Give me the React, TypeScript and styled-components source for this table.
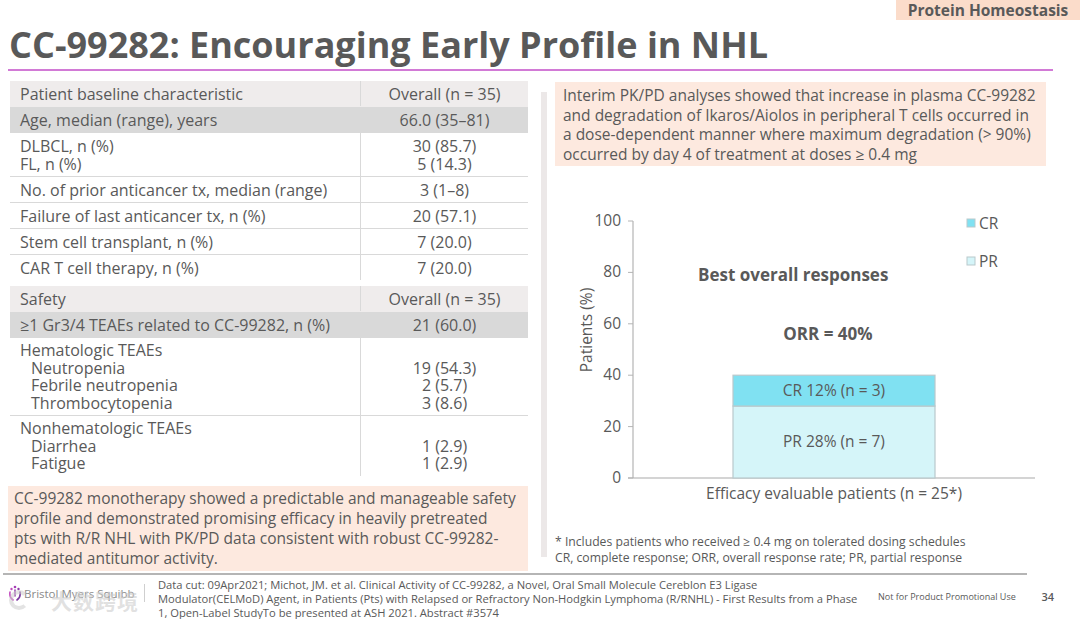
import React from 'react';
import styled, { createGlobalStyle } from 'styled-components';

const Global = createGlobalStyle`
  html, body { margin: 0; padding: 0; background: #fff; }
  body { font-family: "Open Sans", "Noto Sans", sans-serif; color: #595959; }
  * { box-sizing: border-box; }
`;

const TEXT = '#595959';

const Page = styled.div`
  width: 1080px;
  height: 619px;
  position: relative;
  overflow: hidden;
  background: #fff;
  display: flex;
  flex-direction: column;
`;

const Header = styled.header`
  display: flex;
  flex-direction: column;
`;

const TagRow = styled.div`
  display: flex;
  justify-content: flex-end;
  height: 20px;
`;

const Tag = styled.div`
  width: 184px;
  height: 20px;
  background: #fbdcca;
  font-weight: 700;
  font-size: 15.5px;
  line-height: 20px;
  text-align: center;
  color: ${TEXT};
`;

const Title = styled.h1`
  margin: 0;
  padding-left: 9px;
  height: 49px;
  font-size: 36px;
  font-weight: 700;
  line-height: 50px;
  letter-spacing: 0;
  color: ${TEXT};
  white-space: nowrap;
`;

const Rule = styled.div`
  height: 2px;
  margin: 0 27px 0 8px;
  background: #d27ad6;
`;

const Main = styled.main`
  display: flex;
  height: 502px;
`;

const LeftCol = styled.section`
  width: 518px;
  margin-left: 10px;
  padding-top: 10px;
  display: flex;
  flex-direction: column;
`;

const Table = styled.div`
  display: flex;
  flex-direction: column;
  font-size: 16px;
  color: ${TEXT};
`;

type Tone = 'head' | 'dark' | 'plain';

const Row = styled.div<{ $tone: Tone; $rule: boolean }>`
  display: grid;
  grid-template-columns: 350px 168px;
  background: ${(p) => (p.$tone === 'head' ? '#efecec' : p.$tone === 'dark' ? '#d9d9d9' : '#fff')};
  border-bottom: 1px solid ${(p) => (p.$rule ? '#d9d9d9' : 'transparent')};
`;

const LabelCell = styled.div`
  padding: 4px 0 3px 10px;
  line-height: 18px;
`;

const ValueCell = styled.div`
  padding: 4px 0 3px;
  line-height: 18px;
  text-align: center;
  border-left: 1px solid #d9d9d9;
`;

const Line = styled.div<{ $indent?: boolean }>`
  padding-left: ${(p) => (p.$indent ? '11px' : '0')};
  min-height: 18px;
  white-space: nowrap;
`;

const ListLine = styled(Line)`
  min-height: 17.5px;
  line-height: 17.5px;
`;

const TableGap = styled.div`
  height: 5px;
`;

const Summary = styled.div`
  margin: 9px 0 0 -2px;
  width: 520px;
  height: 85px;
  background: #fde9df;
  padding: 2px 0 0 6px;
  font-size: 15.5px;
  line-height: 20px;
  color: ${TEXT};
  white-space: nowrap;
`;

const Divider = styled.div`
  width: 6px;
  height: 465px;
  margin: 21px 0 0 13px;
  background: #ece8e8;
`;

const RightCol = styled.section`
  width: 491px;
  margin-left: 8px;
  padding-top: 11px;
  display: flex;
  flex-direction: column;
`;

const Callout = styled.div`
  background: #fde9df;
  height: 84px;
  padding: 4px 0 0 8px;
  font-size: 15.5px;
  line-height: 19.5px;
  color: ${TEXT};
  white-space: nowrap;
`;

const Chart = styled.svg`
  display: block;
  width: 491px;
  height: 350px;
  font-family: "Open Sans", "Noto Sans", sans-serif;
`;

const Footnote = styled.div`
  margin-top: 18px;
  font-size: 12.2px;
  line-height: 16px;
  color: ${TEXT};
  white-space: nowrap;
`;

const Footer = styled.footer`
  margin: 0 53px 0 3px;
  border-top: 2px solid #b5b5b5;
  height: 46px;
  display: flex;
  position: relative;
`;

const Logo = styled.div`
  width: 142px;
  height: 18px;
  margin-top: 9px;
  padding-left: 5px;
  display: flex;
  align-items: center;
  gap: 2px;
  align-self: flex-start;
  font-size: 11.5px;
  color: #8a8a8a;
  white-space: nowrap;
  border-right: 1px solid #cfcfcf;
`;

const Citation = styled.div`
  margin-left: 13px;
  width: 712px;
  padding-top: 3px;
  font-size: 11.2px;
  line-height: 14px;
  color: ${TEXT};
  white-space: nowrap;
`;

const Disclaimer = styled.div`
  margin-left: 8px;
  padding-top: 16px;
  font-size: 9px;
  line-height: 12px;
  color: ${TEXT};
  white-space: nowrap;
`;

const PageNum = styled.div`
  position: absolute;
  right: -27px;
  top: 14px;
  font-size: 11px;
  font-weight: 600;
  color: ${TEXT};
`;

const Watermark = styled.div`
  position: absolute;
  left: 6px;
  top: 13px;
  display: flex;
  align-items: center;
  gap: 22px;
  font-family: "Noto Sans CJK SC", sans-serif;
  font-size: 21px;
  font-weight: 700;
  line-height: 24px;
  color: rgba(205, 205, 205, 0.6);
  pointer-events: none;
  letter-spacing: 1px;
`;

const WmRing = styled.span`
  width: 20px;
  height: 20px;
  border-radius: 50%;
  border: 4px solid rgba(205, 205, 205, 0.55);
  border-right-color: transparent;
`;

type RowData = { label: string[]; value: string[]; tone: Tone; rule: boolean; list?: boolean };

const table1: RowData[] = [
  { label: ['Patient baseline characteristic'], value: ['Overall (n = 35)'], tone: 'head', rule: false },
  { label: ['Age, median (range), years'], value: ['66.0 (35–81)'], tone: 'dark', rule: false },
  { label: ['DLBCL, n (%)', 'FL, n (%)'], value: ['30 (85.7)', '5 (14.3)'], tone: 'plain', rule: true },
  { label: ['No. of prior anticancer tx, median (range)'], value: ['3 (1–8)'], tone: 'plain', rule: true },
  { label: ['Failure of last anticancer tx, n (%)'], value: ['20 (57.1)'], tone: 'plain', rule: true },
  { label: ['Stem cell transplant, n (%)'], value: ['7 (20.0)'], tone: 'plain', rule: true },
  { label: ['CAR T cell therapy, n (%)'], value: ['7 (20.0)'], tone: 'plain', rule: false },
];

const table2: RowData[] = [
  { label: ['Safety'], value: ['Overall (n = 35)'], tone: 'head', rule: false },
  { label: ['≥1 Gr3/4 TEAEs related to CC-99282, n (%)'], value: ['21 (60.0)'], tone: 'dark', rule: false },
  {
    label: ['Hematologic TEAEs', 'Neutropenia', 'Febrile neutropenia', 'Thrombocytopenia'],
    value: ['', '19 (54.3)', '2 (5.7)', '3 (8.6)'],
    tone: 'plain',
    rule: true,
    list: true,
  },
  {
    label: ['Nonhematologic TEAEs', 'Diarrhea', 'Fatigue'],
    value: ['', '1 (2.9)', '1 (2.9)'],
    tone: 'plain',
    rule: false,
    list: true,
  },
];

function DataTable({ rows }: { rows: RowData[] }) {
  return (
    <Table>
      {rows.map((r, i) => {
        const L = r.list ? ListLine : Line;
        return (
          <Row key={i} $tone={r.tone} $rule={r.rule}>
            <LabelCell>
              {r.label.map((t, j) => (
                <L key={j} $indent={!!r.list && j > 0}>
                  {t}
                </L>
              ))}
            </LabelCell>
            <ValueCell>
              {r.value.map((t, j) => (
                <L key={j}>{t}</L>
              ))}
            </ValueCell>
          </Row>
        );
      })}
    </Table>
  );
}

const ticks = [100, 80, 60, 40, 20, 0];
const Y0 = 312;
const STEP = 2.57;

function ResponseChart() {
  const y = (v: number) => Y0 - v * STEP;
  return (
    <Chart viewBox="0 0 491 350">
      <line x1={78} y1={y(100)} x2={78} y2={Y0} stroke="#b4b4b4" strokeWidth={1.2} />
      <line x1={73} y1={Y0} x2={480} y2={Y0} stroke="#a9a9a9" strokeWidth={1.2} />
      {ticks.map((t) => (
        <g key={t}>
          <line x1={73} y1={y(t)} x2={78} y2={y(t)} stroke="#b4b4b4" strokeWidth={1} />
          <text x={66} y={y(t) + 5} textAnchor="end" fontSize={15.5} fill={TEXT}>
            {t}
          </text>
        </g>
      ))}
      <text transform="translate(37 164) rotate(-90)" textAnchor="middle" fontSize={15.5} fill={TEXT}>
        Patients (%)
      </text>
      <rect x={178} y={y(28)} width={202} height={28 * STEP} fill="#d5f5f9" stroke="#b9c9cc" strokeWidth={1.2} />
      <rect x={178} y={y(40)} width={202} height={12 * STEP} fill="#80e1f2" stroke="#b9c9cc" strokeWidth={1.2} />
      <text x={279} y={y(34) + 5} textAnchor="middle" fontSize={15.5} fill={TEXT}>
        CR 12% (n = 3)
      </text>
      <text x={279} y={y(14) + 5} textAnchor="middle" fontSize={15.5} fill={TEXT}>
        PR 28% (n = 7)
      </text>
      <text x={143} y={115} fontSize={17} fontWeight={700} fill={TEXT}>
        Best overall responses
      </text>
      <text x={273} y={174} textAnchor="middle" fontSize={17} fontWeight={700} fill={TEXT}>
        ORR = 40%
      </text>
      <rect x={412} y={53} width={8} height={8} fill="#80e1f2" stroke="#b9c9cc" strokeWidth={1} />
      <text x={424} y={63} fontSize={15.5} fill={TEXT}>
        CR
      </text>
      <rect x={412} y={91} width={8} height={8} fill="#d5f5f9" stroke="#b9c9cc" strokeWidth={1} />
      <text x={424} y={101} fontSize={15.5} fill={TEXT}>
        PR
      </text>
      <text x={279} y={333} textAnchor="middle" fontSize={15.5} fill={TEXT}>
        Efficacy evaluable patients (n = 25*)
      </text>
    </Chart>
  );
}

function BmsMark() {
  return (
    <svg width="14" height="16" viewBox="0 0 14 16">
      <circle cx="7" cy="2" r="1.3" fill="#a53fb5" />
      <circle cx="3.5" cy="4" r="1.2" fill="#c04bbd" />
      <circle cx="10.5" cy="4" r="1.2" fill="#8e3aa8" />
      <path d="M2 7 Q1 12 5 15" stroke="#c553c2" strokeWidth="1.6" fill="none" strokeLinecap="round" />
      <path d="M12 7 Q13 12 9 15" stroke="#7d3aa0" strokeWidth="1.6" fill="none" strokeLinecap="round" />
      <path d="M7 5 L7 11" stroke="#9b44b3" strokeWidth="1.6" strokeLinecap="round" />
    </svg>
  );
}

export default function App() {
  return (
    <Page>
      <Global />
      <Header>
        <TagRow>
          <Tag>Protein Homeostasis</Tag>
        </TagRow>
        <Title>CC-99282: Encouraging Early Profile in NHL</Title>
        <Rule />
      </Header>
      <Main>
        <LeftCol>
          <DataTable rows={table1} />
          <TableGap />
          <DataTable rows={table2} />
          <Summary>
            CC-99282 monotherapy showed a predictable and manageable safety
            <br />
            profile and demonstrated promising efficacy in heavily pretreated
            <br />
            pts with R/R NHL with PK/PD data consistent with robust CC-99282-
            <br />
            mediated antitumor activity.
          </Summary>
        </LeftCol>
        <Divider />
        <RightCol>
          <Callout>
            Interim PK/PD analyses showed that increase in plasma CC-99282
            <br />
            and degradation of Ikaros/Aiolos in peripheral T cells occurred in
            <br />
            a dose-dependent manner where maximum degradation (&gt; 90%)
            <br />
            occurred by day 4 of treatment at doses ≥ 0.4 mg
          </Callout>
          <ResponseChart />
          <Footnote>
            * Includes patients who received ≥ 0.4 mg on tolerated dosing schedules
            <br />
            CR, complete response; ORR, overall response rate; PR, partial response
          </Footnote>
        </RightCol>
      </Main>
      <Footer>
        <Logo>
          <BmsMark />
          Bristol Myers Squibb
        </Logo>
        <Citation>
          Data cut: 09Apr2021; Michot, JM. et al. Clinical Activity of CC-99282, a Novel, Oral Small
          Molecule Cereblon E3 Ligase
          <br />
          Modulator(CELMoD) Agent, in Patients (Pts) with Relapsed or Refractory Non-Hodgkin Lymphoma
          (R/RNHL) - First Results from a Phase
          <br />
          1, Open-Label StudyTo be presented at ASH 2021. Abstract #3574
        </Citation>
        <Disclaimer>Not for Product Promotional Use</Disclaimer>
        <PageNum>34</PageNum>
        <Watermark>
          <WmRing />
          大数跨境
        </Watermark>
      </Footer>
    </Page>
  );
}
